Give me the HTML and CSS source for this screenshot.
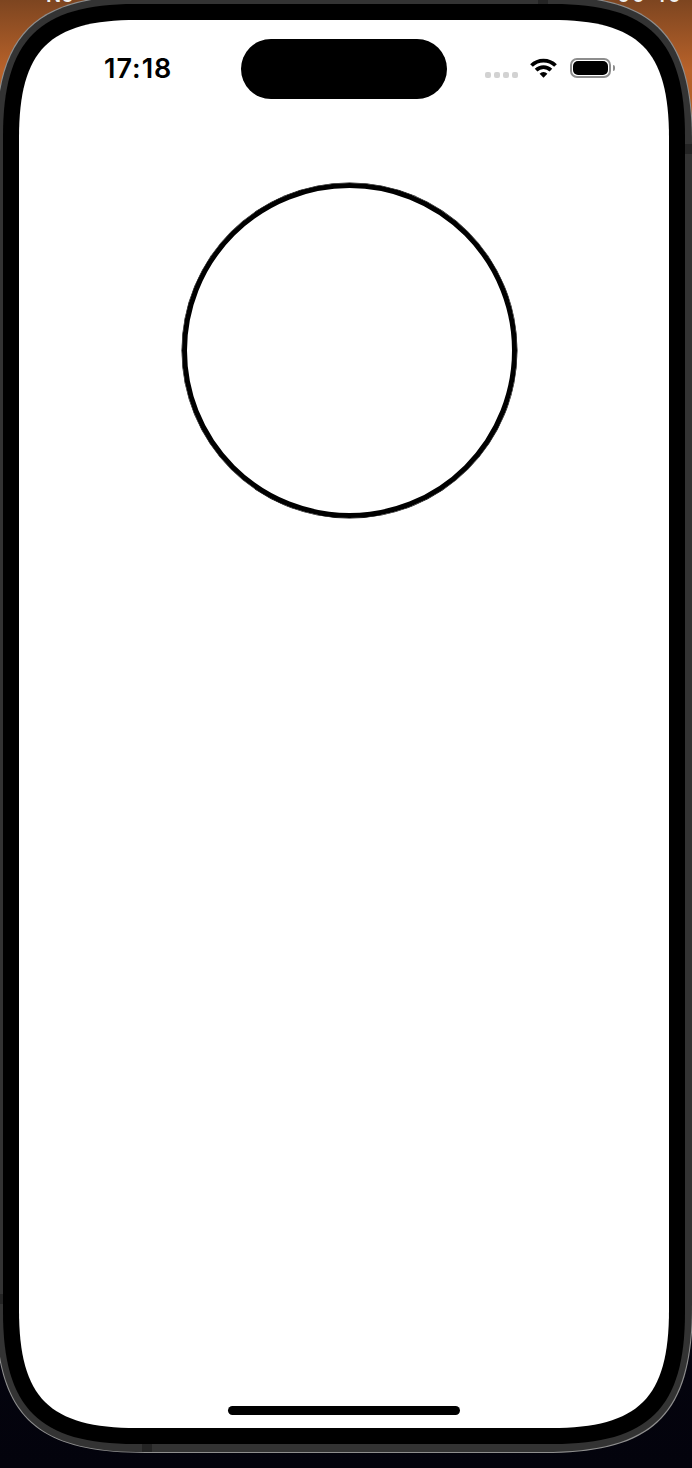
FILE: index.html
```html
<!DOCTYPE html>
<html lang="en">
<head>
  <meta charset="UTF-8" />
  <meta name="viewport" content="width=device-width, initial-scale=1.0"/>
  <title>Phone preview</title>
  <link rel="stylesheet" href="styles.css">
</head>
<body>

  <!-- desktop menu bar text, mostly hidden behind the phone -->
  <div class="desk-text desk-left">Ne</div>
  <div class="desk-text desk-right">00 40</div>

  <div class="phone">
    <div class="phone-body">
      <span class="band band-top"></span>
      <span class="band band-bottom"></span>
      <span class="band band-left"></span>
      <span class="band band-right"></span>

      <div class="bezel">
        <div class="screen">

          <div class="status-bar">
            <div class="time">17:18</div>
            <div class="island"></div>
            <div class="status-icons">
              <div class="signal">
                <span></span><span></span><span></span><span></span>
              </div>
              <svg class="wifi" width="27" height="20" viewBox="0 0 27 20">
                <path d="M1.5 7.5A17 17 0 0 1 25.5 7.5" fill="none" stroke="#000" stroke-width="3.8"/>
                <path d="M6.1 12.1A10.5 10.5 0 0 1 20.9 12.1" fill="none" stroke="#000" stroke-width="3.8"/>
                <path d="M13.5 19.8L9.6 15.7A5.5 5.5 0 0 1 17.4 15.7Z" fill="#000"/>
              </svg>
              <div class="battery">
                <div class="battery-fill"></div>
              </div>
              <div class="battery-nub"></div>
            </div>
          </div>

          <div class="circle"></div>

          <div class="home-bar"></div>
        </div>
      </div>
    </div>
  </div>

</body>
</html>
```

FILE: styles.css
```css
:root {
  --frame: #333333;
  --frame-dark: #242424;
  --edge: #8f8f8f;
}

html, body {
  height: 100%;
}

body {
  margin: 0;
  overflow: hidden;
  position: relative;
  font-family: "Inter", "Liberation Sans", sans-serif;
  background: linear-gradient(to bottom, #7d4520 0, #b8622a 70px, #a85a24 160px, #05040f 1300px, #03030c 100%);
}

.desk-text {
  position: absolute;
  top: -13px;
  color: #f1f1f1;
  font-size: 20px;
  line-height: 16px;
  font-weight: 600;
}

.desk-left {
  left: 46px;
}

.desk-right {
  left: 617px;
  letter-spacing: 1.5px;
}

/* continuous corners, border-radius can't do these */
.phone {
  position: relative;
  box-sizing: border-box;
  width: 698px;
  height: 1458px;
  margin: -5px 0 0 -5px;
  padding: 1px;
  background: var(--edge);
  clip-path: path("M0 150C0 38 38 0 150 0H548C660 0 698 38 698 150V1308C698 1420 660 1458 548 1458H150C38 1458 0 1420 0 1308Z");
}

.phone-body {
  position: relative;
  box-sizing: border-box;
  height: 100%;
  padding: 8px 7px;
  background: var(--frame);
  clip-path: path("M0 149C0 38 38 0 149 0H547C658 0 696 38 696 149V1307C696 1418 658 1456 547 1456H149C38 1456 0 1418 0 1307Z");
}

.band {
  position: absolute;
  background: var(--frame-dark);
}

.band-top {
  top: 0;
  left: 542px;
  width: 10px;
  height: 8px;
}

.band-bottom {
  bottom: 0;
  left: 146px;
  width: 10px;
  height: 8px;
}

.band-left {
  left: 0;
  top: 1298px;
  width: 7px;
  height: 10px;
}

.band-right {
  right: 0;
  top: 148px;
  width: 7px;
  height: 10px;
}

.bezel {
  position: relative;
  box-sizing: border-box;
  height: 100%;
  padding: 16px;
  background: #000;
  clip-path: path("M0 132C0 36 36 0 132 0H550C646 0 682 36 682 132V1308C682 1404 646 1440 550 1440H132C36 1440 0 1404 0 1308Z");
}

.screen {
  display: flex;
  flex-direction: column;
  height: 100%;
  background: #fff;
  clip-path: path("M0 118C0 30 30 0 118 0H532C620 0 650 30 650 118V1290C650 1378 620 1408 532 1408H118C30 1408 0 1378 0 1290Z");
}

.status-bar {
  display: grid;
  grid-template-columns: 222px 206px 1fr;
  height: 60px;
  margin-top: 19px;
}

.time {
  padding: 16px 0 0 85px;
  color: #000;
  font-size: 27px;
  line-height: 27px;
  font-weight: 600;
  letter-spacing: 1px;
}

.island {
  background: #000;
  border-radius: 30px;
}

.status-icons {
  display: flex;
  align-items: flex-start;
  padding-left: 38px;
}

.signal {
  display: flex;
  gap: 3px;
  margin: 33px 12px 0 0;
}

.signal span {
  width: 6px;
  height: 6px;
  background: #d2d2d2;
  border-radius: 2px;
}

.wifi {
  margin: 19px 13px 0 0;
}

.battery {
  box-sizing: border-box;
  width: 41px;
  height: 20px;
  margin-top: 19px;
  padding: 1px;
  border: 2px solid #8d8d8d;
  border-radius: 7px;
}

.battery-fill {
  height: 100%;
  background: #000;
  border-radius: 5px;
}

.battery-nub {
  width: 2px;
  height: 6px;
  margin: 26px 0 0 2px;
  background: #8d8d8d;
  border-radius: 0 2px 2px 0;
}

.circle {
  box-sizing: border-box;
  width: 335px;
  height: 335px;
  margin: 84px 0 0 163px;
  border: 5px solid #000;
  border-radius: 50%;
  box-shadow: 0 0 0 0.5px #000;
}

.home-bar {
  align-self: center;
  width: 232px;
  height: 9px;
  margin: auto 0 13px;
  background: #000;
  border-radius: 5px;
}
```
